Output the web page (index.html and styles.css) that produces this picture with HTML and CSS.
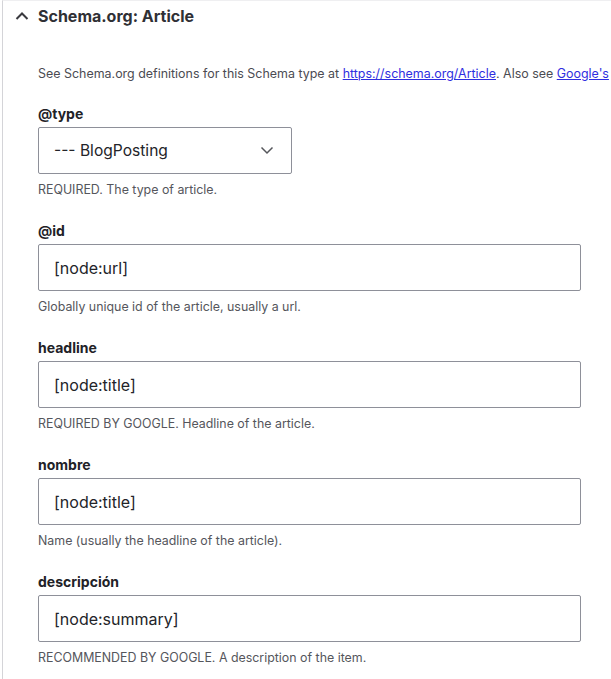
FILE: index.html
```html
<!DOCTYPE html>
<html lang="en">
<head>
<meta charset="utf-8">
<title>Schema.org: Article</title>
<link rel="stylesheet" href="styles.css">
</head>
<body>
<div class="panel">
  <div class="summary">
    <svg class="chev" width="14" height="10" viewBox="0 0 14 10"><path d="M1.5 8 L7 2.5 L12.5 8" fill="none" stroke="#3a3a3f" stroke-width="2"/></svg>
    <span class="title">Schema.org: Article</span>
  </div>
  <div class="content">
    <p class="desc">See Schema.org definitions for this Schema type at <a href="#">https://schema.org/Article</a>. Also see <a href="#">Google's</a></p>

    <div class="field">
      <div class="label">@type</div>
      <div class="select">
        <span>--- BlogPosting</span>
        <svg width="14" height="9" viewBox="0 0 14 9"><path d="M1.5 1.5 L7 7 L12.5 1.5" fill="none" stroke="#55565b" stroke-width="1.5"/></svg>
      </div>
      <div class="help">REQUIRED. The type of article.</div>
    </div>

    <div class="field">
      <div class="label">@id</div>
      <div class="input">[node:url]</div>
      <div class="help">Globally unique id of the article, usually a url.</div>
    </div>

    <div class="field">
      <div class="label">headline</div>
      <div class="input">[node:title]</div>
      <div class="help">REQUIRED BY GOOGLE. Headline of the article.</div>
    </div>

    <div class="field">
      <div class="label">nombre</div>
      <div class="input">[node:title]</div>
      <div class="help">Name (usually the headline of the article).</div>
    </div>

    <div class="field">
      <div class="label">descripción</div>
      <div class="input">[node:summary]</div>
      <div class="help">RECOMMENDED BY GOOGLE. A description of the item.</div>
    </div>
  </div>
</div>
</body>
</html>
```

FILE: styles.css
```css
html, body {
  margin: 0;
  padding: 0;
  background: #fff;
  overflow: hidden;
}
body {
  font-family: Inter, "Liberation Sans", sans-serif;
  color: #232429;
}
.panel {
  margin-left: 2px;
  border-left: 1px solid #d4d4d8;
  border-top: 1px solid #efeff1;
  height: 679px;
  box-sizing: border-box;
  overflow: hidden;
}
.summary {
  display: flex;
  align-items: center;
  height: 32px;
  padding-left: 12px;
}
.chev {
  margin-right: 9px;
  margin-top: -2px;
}
.title {
  font-size: 16px;
  font-weight: 700;
  color: #2f3035;
  margin-top: -3px;
}
.content {
  padding-left: 35px;
}
.desc {
  margin: 32px 0 0;
  font-size: 12.45px;
  color: #4b4b52;
  white-space: nowrap;
  line-height: 17px;
}
.desc a {
  color: #2f2ee0;
}
.field {
  display: flex;
  flex-direction: column;
  align-items: flex-start;
}
.desc + .field {
  margin-top: 23px;
}
.field + .field {
  margin-top: 24px;
}
.label {
  font-size: 14px;
  font-weight: 700;
  line-height: 18px;
  color: #222227;
  margin-bottom: 4px;
}
.select, .input {
  box-sizing: border-box;
  height: 47px;
  border: 1px solid #8e9099;
  border-radius: 2px;
  font-size: 16px;
  color: #232429;
  display: flex;
  align-items: center;
  padding-left: 15px;
}
.select {
  width: 254px;
  justify-content: space-between;
  padding-right: 17px;
  font-size: 15.6px;
}
.input {
  width: 543px;
}
.help {
  font-size: 12.4px;
  line-height: 16px;
  color: #55565c;
  margin-top: 8px;
}
```
